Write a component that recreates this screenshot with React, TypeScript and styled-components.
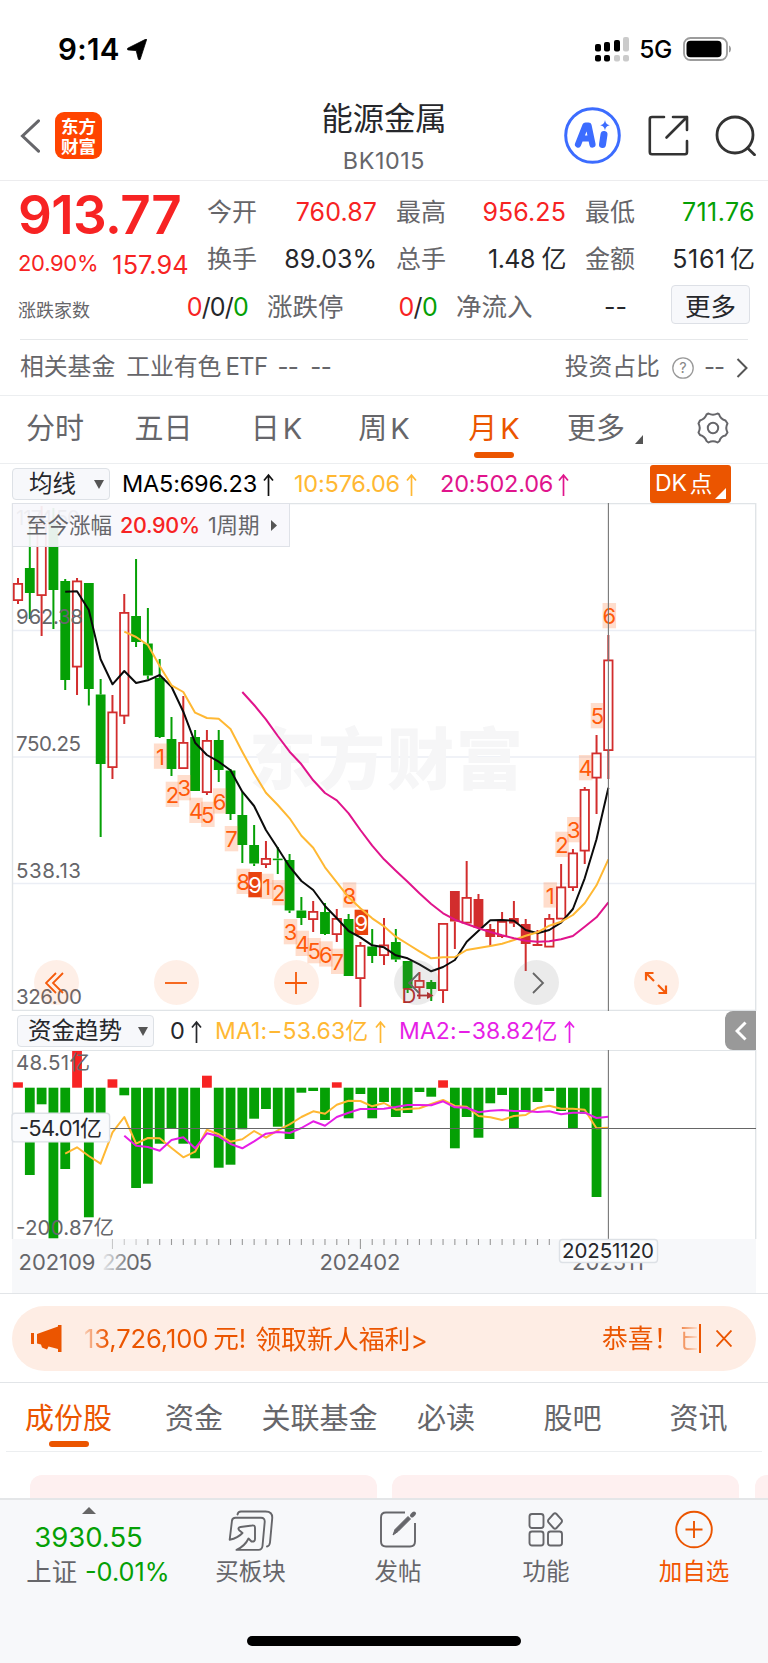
import React from 'react';
import styled, { createGlobalStyle } from 'styled-components';

const RED = '#f72323';
const GREEN = '#05a005';
const ORANGE = '#eb5500';
const GRAY = '#66666a';
const INK = '#26272b';
const YELLOW = '#ffb833';
const PINK = '#e0148c';
const MAGENTA = '#e61ee6';
const LINE = '#e6e8ea';

const Global = createGlobalStyle`
  * { box-sizing: border-box; }
  body {
    margin: 0;
    background: #fff;
    font-family: Inter, "Noto Sans CJK SC", sans-serif;
    color: ${INK};
  }
`;

const Page = styled.div`
  width: 768px;
  height: 1663px;
  overflow: hidden;
  display: flex;
  flex-direction: column;
  background: #fff;
`;

const Label = styled.span<{ $size?: number; $color?: string; $ls?: number; $weight?: number }>`
  font-size: ${(p) => p.$size ?? 25}px;
  color: ${(p) => p.$color ?? GRAY};
  letter-spacing: ${(p) => p.$ls ?? 0}px;
  font-weight: ${(p) => p.$weight ?? 400};
  line-height: 1.2;
  white-space: nowrap;
`;

/* ---------- status bar ---------- */
const StatusBar = styled.div`
  height: 96px;
  flex: none;
  display: flex;
  align-items: center;
  padding: 2px 36px 0 58px;
  svg { flex: none; }
`;
const Spacer = styled.div`flex: 1;`;
const Clock = styled(Label)`
  width: 69px;
  margin-top: 1px;
`;

/* ---------- header ---------- */
const Header = styled.header`
  height: 85px;
  flex: none;
  display: grid;
  grid-template-columns: 1fr auto 1fr;
  border-bottom: 1.5px solid #ececee;
`;
const HeaderLeft = styled.div`
  display: flex;
  align-items: center;
  gap: 15px;
  padding: 0 0 5px 20px;
`;
const HeaderRight = styled(HeaderLeft)`
  justify-content: flex-end;
  gap: 26.5px;
  padding: 0 12px 5px 0;
`;
const Logo = styled.div`
  width: 47px;
  height: 47px;
  border-radius: 9px;
  background: #ff4400;
  color: #fff;
  font: 700 17.5px/20px "Noto Sans CJK SC", sans-serif;
  display: flex;
  align-items: center;
  justify-content: center;
  text-align: center;
`;
const TitleBlock = styled.div`
  display: flex;
  flex-direction: column;
  align-items: center;
  padding-top: 5px;
`;

/* ---------- quote ---------- */
const Quote = styled.section`
  height: 158px;
  flex: none;
  display: grid;
  grid-template-columns: 189px 1fr;
  grid-template-rows: 103px 1fr;
  padding: 0 14px 0 18px;
`;
const PriceBlock = styled.div`
  display: flex;
  flex-direction: column;
  padding-top: 3px;
`;
const ChangeRow = styled.div`
  display: flex;
  align-items: center;
  gap: 14px;
  height: 30px;
  margin-top: 1px;
`;
const StatGrid = styled.div`
  display: grid;
  grid-template-columns: repeat(3, 170px);
  column-gap: 19px;
  grid-auto-rows: 47px;
  padding-top: 7px;
`;
const Stat = styled.div`
  display: flex;
  align-items: center;
  justify-content: space-between;
`;
const BreadthRow = styled.div`
  grid-column: 1 / 3;
  display: flex;
  align-items: center;
  padding-bottom: 9px;
`;
const Cell = styled.div<{ $w: number; $end?: boolean }>`
  width: ${(p) => p.$w}px;
  flex: none;
  display: flex;
  align-items: center;
  justify-content: ${(p) => (p.$end ? 'flex-end' : 'flex-start')};
`;
const MoreButton = styled.button`
  width: 79px;
  height: 39px;
  margin: 0 0 5px;
  padding: 0;
  border: 1.5px solid #dde0e6;
  border-radius: 4px;
  background: #f7f8fb;
  font: 400 25.5px/30px "Noto Sans CJK SC", sans-serif;
  color: ${INK};
`;

const FundRow = styled.div`
  height: 56px;
  flex: none;
  margin: 0 20px;
  border-top: 1.5px solid ${LINE};
  display: flex;
  align-items: center;
`;

/* ---------- tabs ---------- */
const Tabs = styled.nav<{ $h: number; $inset?: number }>`
  height: ${(p) => p.$h}px;
  flex: none;
  display: flex;
  margin: 0 ${(p) => p.$inset ?? 0}px;
  border-bottom: 1.5px solid #eceef0;
`;
const TopTabs = styled(Tabs)`
  border-top: 1.5px solid #eceef0;
`;
const Tab = styled.div<{ $w: number; $active?: boolean; $low?: boolean }>`
  width: ${(p) => p.$w}px;
  flex: none;
  display: flex;
  flex-direction: column;
  align-items: center;
  padding-top: ${(p) => (p.$low ? 18 : 15)}px;
  font-size: 29px;
  line-height: 36px;
  word-spacing: -5px;
  white-space: nowrap;
  color: ${(p) => (p.$active ? ORANGE : GRAY)};
  &::after {
    content: '';
    display: ${(p) => (p.$active ? 'block' : 'none')};
    width: 40px;
    height: 6px;
    margin-top: ${(p) => (p.$low ? 4 : 5)}px;
    border-radius: 3px;
    background: ${ORANGE};
  }
`;
const MoreTab = styled(Tab)`
  flex-direction: row;
  align-items: flex-start;
  justify-content: center;
  gap: 10px;
  svg { margin-top: 24px; }
`;

/* ---------- indicator rows ---------- */
const IndicatorRow = styled.div<{ $h: number; $pl: number }>`
  height: ${(p) => p.$h}px;
  flex: none;
  display: flex;
  align-items: center;
  padding-left: ${(p) => p.$pl}px;
`;
const SelectBox = styled.div<{ $w: number }>`
  width: ${(p) => p.$w}px;
  height: 32px;
  flex: none;
  display: flex;
  align-items: center;
  justify-content: space-between;
  margin-top: 1px;
  padding: 0 5px 0 ${(p) => (p.$w > 110 ? 10 : 16)}px;
  border: 1.5px solid #dde1e6;
  border-radius: 4px;
  background: #f7f8fb;
`;
const Reading = styled.div<{ $w: number }>`
  width: ${(p) => p.$w}px;
  flex: none;
  display: flex;
  align-items: center;
  justify-content: space-between;
  padding-top: 2px;
`;
const DKButton = styled.div`
  width: 81px;
  height: 38px;
  margin-left: 81px;
  border-radius: 3px;
  background: ${ORANGE};
  display: flex;
  align-items: center;
  padding-left: 5px;
  gap: 3px;
`;
const Corner = styled.svg`
  margin-top: 19px;
`;

/* ---------- charts ---------- */
const ChartFrame = styled.div<{ $h: number }>`
  height: ${(p) => p.$h}px;
  flex: none;
  position: relative;
  svg { display: block; }
`;
const RangeTip = styled.div`
  position: absolute;
  left: 12px;
  top: 0;
  width: 278px;
  height: 44px;
  display: flex;
  align-items: center;
  padding: 1px 0 0 13px;
  gap: 8px;
  border: 1.5px solid #dfe2e8;
  background: rgba(248, 248, 252, 0.93);
`;
const SideHandle = styled.div`
  width: 31px;
  height: 39px;
  margin-left: 150px;
  border-radius: 8px 0 0 8px;
  background: #999;
  display: flex;
  align-items: center;
  justify-content: center;
`;
const RoundButtons = styled.div`
  position: absolute;
  left: 33.5px;
  bottom: 6px;
  display: flex;
  gap: 75px;
`;
const RoundButton = styled.div<{ $neutral?: boolean }>`
  width: 45px;
  height: 45px;
  border-radius: 50%;
  background: ${(p) => (p.$neutral ? 'rgba(120,120,120,.15)' : 'rgba(250,110,40,.11)')};
  display: flex;
  align-items: center;
  justify-content: center;
`;

/* ---------- banner ---------- */
const BannerWrap = styled.div`
  height: 90px;
  flex: none;
  border-top: 1.5px solid #e2e5e8;
  border-bottom: 1.5px solid #e2e5e8;
  padding: 12px 12px 0;
`;
const Banner = styled.div`
  height: 65px;
  border-radius: 33px;
  background: #feede4;
  display: flex;
  align-items: center;
  padding-left: 19px;
`;
const Marquee = styled.div`
  flex: none;
  width: 613px;
  margin-left: 21px;
  padding-top: 2px;
  display: flex;
  overflow: hidden;
  mask-image: linear-gradient(90deg, rgba(0,0,0,.2) 0, #000 24px, #000 588px, rgba(0,0,0,.1) 613px);
`;
const Bar = styled.div`
  width: 1.5px;
  height: 29px;
  background: ${ORANGE};
`;

const Cards = styled.div`
  height: 46px;
  flex: none;
  padding: 23px 0 0 29.5px;
  display: flex;
  gap: 15.5px;
`;
const Card = styled.div`
  width: 347px;
  flex: none;
  border-radius: 12px 12px 0 0;
  background: #fef0f0;
`;

/* ---------- bottom bar ---------- */
const BottomBar = styled.footer`
  height: 165px;
  flex: none;
  border-top: 2.5px solid #e4e6e8;
  background: #f7f8fa;
  display: flex;
  flex-direction: column;
  justify-content: space-between;
  align-items: center;
  padding-bottom: 17px;
`;
const BarItems = styled.div`
  width: 768px;
  display: flex;
`;
const IndexBox = styled.div`
  width: 177px;
  display: flex;
  flex-direction: column;
  align-items: center;
  padding-top: 7px;
`;
const IndexLine = styled.div`
  display: flex;
  align-items: center;
  gap: 8px;
  margin: 3px 0 0 19px;
`;
const BarItem = styled.div<{ $w: number }>`
  width: ${(p) => p.$w}px;
  flex: none;
  display: flex;
  flex-direction: column;
  align-items: center;
  padding-top: 9px;
  gap: 6px;
`;
const HomeIndicator = styled.div`
  width: 274px;
  height: 10px;
  border-radius: 5px;
  background: #000;
`;

/* ---------- data, in chart pixels: [kind, high, bodyTop, bodyBottom, low] ---------- */
type Candle = ['u' | 'd' | 's', number, number, number, number];
const candles: Candle[] = [
  ['u', 578, 583.5, 600.5, 604], ['d', 520, 568, 593, 619], ['u', 506, 524, 595.5, 636], ['d', 508, 524, 590, 629],
  ['d', 579, 581, 680, 690], ['u', 578, 581, 667, 695], ['d', 583, 583, 689, 705.5], ['d', 679, 694.5, 764, 837],
  ['u', 695, 712, 767.5, 779], ['u', 594, 612.5, 716, 724], ['d', 559, 616, 642, 647], ['d', 608, 643.5, 675.5, 679],
  ['d', 659, 678, 737, 738], ['d', 717, 739, 769, 776], ['u', 696, 742.5, 768.5, 769], ['d', 730, 737, 791, 791],
  ['u', 730, 740.5, 792.5, 795], ['d', 730, 740, 770, 782], ['d', 769, 770.5, 814, 820], ['d', 792, 815, 845, 863],
  ['d', 825, 845, 863.5, 866], ['u', 841, 858.5, 864.5, 868], ['d', 847, 858.6, 860.2, 874], ['d', 854, 860, 910.5, 913],
  ['d', 897, 910.5, 918, 925], ['u', 901, 911.5, 919.5, 932], ['d', 903, 912, 934, 935], ['u', 909, 918.5, 934.5, 942],
  ['d', 914, 919, 976, 976], ['u', 942, 945.5, 978.5, 1007], ['d', 929, 946.5, 956, 963], ['u', 918, 945, 955.5, 965],
  ['d', 929, 942, 959.5, 962], ['d', 961, 961, 988.5, 993], ['u', 972, 980.5, 987.5, 999], ['d', 980, 982, 989, 1001],
  ['u', 923, 923.5, 990.5, 1003], ['s', 891, 891, 921.5, 949], ['u', 861, 897.5, 923, 923], ['s', 894, 899, 928, 928],
  ['s', 924, 929, 937, 946], ['u', 912, 921.5, 936.5, 938], ['s', 901, 918, 923.5, 927], ['s', 919, 924, 944, 971],
  ['s', 930, 944, 946, 946], ['u', 914, 918.5, 947, 947], ['u', 864, 887, 919, 919], ['u', 849, 853, 887.5, 891],
  ['u', 787, 789.5, 851, 864], ['u', 735, 753, 778, 814], ['u', 635, 660, 750.5, 779],
];
const ma5 = [591.7, 591.3, 610, 659.3, 684.3, 671, 683, 680.3, 675, 686.7, 711.7, 742.7, 755, 761.7, 770.3, 791.7, 806, 830, 848.3, 866.7, 881, 890, 906, 918.3, 931, 937.3, 945.3, 947.3, 955.3, 958.3, 964.3, 971.3, 967, 960, 941.7, 930.7, 920.3, 920, 920.7, 930, 933.3, 930, 922.7, 909, 878.3, 839.3, 787.7];
const ma10 = [631.7, 637, 645, 666, 685.3, 692, 712.7, 718, 718.7, 729, 751.7, 773.3, 792.7, 805, 818.3, 835.7, 847.7, 867.3, 882.3, 897.3, 908.3, 918.3, 926.3, 936.7, 944, 951.3, 958.3, 957.3, 957, 950, 948, 946, 943.7, 940, 935.7, 932.3, 925.7, 921.7, 915, 903.3, 885.3, 859.3];
const ma20 = [692, 705, 719.3, 736, 751.7, 764.3, 780.3, 793, 800.3, 813.3, 830, 845.7, 859.3, 870.7, 881.7, 893.3, 904, 913.3, 919.7, 924, 928.3, 932, 935.3, 938.3, 940.7, 941.7, 941.3, 939.3, 936, 926.7, 917.3, 902.3];
const counts: [number, string, number][] = [
  [12, '1', 743.5], [13, '2', 781.7], [14, '3', 775], [15, '4', 797.7], [16, '5', 801.7], [17, '6', 788.3], [18, '7', 826],
  [19, '8', 868.7], [20, '9', 872], [21, '1', 873.7], [22, '2', 880], [23, '3', 919], [24, '4', 930.7], [25, '5', 938],
  [26, '6', 941.3], [27, '7', 948.7], [28, '8', 882.3], [29, '9', 909.7], [45, '1', 882.3], [46, '2', 831.7], [47, '3', 817],
  [48, '4', 755], [49, '5', 703], [50, '6', 603],
];
const flows = [1082.3, 1175, 1104.3, 1238.3, 1169, 1051, 1217.3, 1125, 1079.3, 1095.3, 1188, 1183.7, 1143.7, 1128, 1143.7, 1158.3, 1075.7, 1167.7, 1164.7, 1129.3, 1118.7, 1109, 1126.7, 1139, 1092.7, 1091, 1120, 1082.3, 1118.3, 1094, 1118.3, 1102, 1117, 1113, 1092, 1096.7, 1080.3, 1148.3, 1117, 1137.7, 1103.3, 1095, 1128.7, 1111.7, 1102, 1091, 1111, 1129, 1113.7, 1197];
const flow5 = [1153.7, 1147.3, 1156, 1163.7, 1132.3, 1117, 1143.7, 1138, 1138.3, 1148, 1157.3, 1151.7, 1129.7, 1134.3, 1141.7, 1139.3, 1131, 1137.7, 1130.3, 1124.3, 1117, 1111.3, 1113.7, 1104.7, 1100.7, 1101, 1106.3, 1103, 1109.7, 1109, 1108.3, 1104, 1100, 1106, 1106.7, 1116, 1117.3, 1120, 1116, 1115, 1108, 1105.7, 1108.7, 1108.7, 1109.7, 1128.3, 1127.7];
const flow10 = [1135.7, 1145.7, 1147, 1150.7, 1140, 1137.3, 1148.3, 1133.3, 1136.3, 1144, 1148.3, 1141.3, 1133.7, 1132, 1133, 1128, 1121.3, 1125.7, 1117, 1112.7, 1109, 1109, 1108.7, 1107, 1105, 1105, 1105.3, 1101.3, 1107.3, 1107.7, 1112.3, 1110.7, 1110, 1111, 1111, 1112, 1111.3, 1114.3, 1112.7, 1112.7, 1118, 1116.7];

const px = (i: number) => 18 + 11.807 * i;
const path = (ys: number[], start: number) => ys.map((y, k) => `${px(start + k).toFixed(1)},${y}`).join(' ');

const AxisText = styled.text<{ $large?: boolean; $ink?: boolean }>`
  font: 400 ${(p) => (p.$large ? 22 : 20.5)}px Inter, "Noto Sans CJK SC", sans-serif;
  fill: ${(p) => (p.$ink ? INK : GRAY)};
`;
const CountText = styled.text`
  font: 400 22px Inter, sans-serif;
  text-anchor: middle;
`;
const Watermark = styled.text`
  font: 900 67px "Noto Sans CJK SC", sans-serif;
  fill: #f6f6f7;
`;

const Up = ({ color }: { color: string }) => (
  <svg width="11" height="24" viewBox="0 0 11 24" fill="none" stroke={color} strokeWidth="1.7">
    <path d="M5.5 23V2M1 7.5L5.5 2L10 7.5" />
  </svg>
);
const Down = () => (
  <svg width="10" height="9" viewBox="0 0 10 9"><path d="M0 0H10L5 9Z" fill="#555" /></svg>
);

const PriceChart = () => (
  <svg width="768" height="508" viewBox="0 503 768 508">
    <g stroke="#ebeef5" strokeWidth="1.4">
      <path d="M12 630.5H756M12 757H756M12 883.5H756" />
      <path d="M12.5 503.6H755.7V1010.4H12.5Z" fill="none" stroke="#e0e4e7" />
    </g>
    <Watermark x="249" y="783.5" textLength="274">东方财富</Watermark>
    {candles.map(([k, hi, top, bot, lo], i) => {
      const x = px(i);
      const color = k === 'd' ? GREEN : '#d22d2d';
      return (
        <g key={i} stroke={color} strokeWidth="2">
          <path d={`M${x} ${hi}V${top}M${x} ${bot}V${lo}`} />
          {k === 'u'
            ? <rect x={x - 4.2} y={top + 0.4} width="8.4" height={Math.max(bot - top - 0.8, 1)} fill="none" strokeWidth="1.8" />
            : <rect x={x - 4.9} y={top} width="9.8" height={bot - top} fill={color} stroke="none" />}
        </g>
      );
    })}
    {counts.map(([i, n, y]) => (
      <g key={i}>
        <rect x={px(i) - 5.8} y={y} width="13.5" height="25.3" fill={n === '9' ? '#e8430f' : 'rgba(255,120,50,.25)'} />
        <CountText x={px(i) + 0.9} y={y + 21.3} fill={n === '9' ? '#fff' : '#ff5a0a'}>{n}</CountText>
      </g>
    ))}
    <g fill="none" strokeWidth="2" strokeLinejoin="round">
      <polyline points={path(ma5, 4)} stroke="#0b0b0b" />
      <polyline points={path(ma10, 9)} stroke={YELLOW} />
      <polyline points={path(ma20, 19)} stroke={PINK} />
    </g>
    <AxisText x="16" y="525" textLength="64">1174.50</AxisText>
    <AxisText x="16" y="624.3" textLength="67">962.38</AxisText>
    <AxisText x="16" y="750.5" textLength="65">750.25</AxisText>
    <AxisText x="16" y="877.5" textLength="65">538.13</AxisText>
    <AxisText x="16" y="1004" textLength="66">326.00</AxisText>
    <text x="401.5" y="1003" fontSize="20.5" fill="#b62828">D</text>
    <path d="M417 995.5H430" stroke="#b62828" strokeWidth="1.8" />
    <path d="M427 992L433.5 995.5L427 999Z" fill="#b62828" />
    <path d="M608.4 503V1011" stroke="#777" strokeWidth="1.1" />
  </svg>
);

const FlowChart = () => (
  <svg width="768" height="243" viewBox="0 1050 768 243">
    <path d="M12.5 1239V1050.2M12 1050.2H756M755.7 1050V1239" fill="none" stroke="#e0e4e7" strokeWidth="1.4" />
    <rect x="12" y="1239" width="744" height="54" fill="#f7f8fa" />
    {flows.map((y, i) => (
      <rect key={i} x={px(i) - 4.9} width="9.8" y={Math.min(y, 1087.7)} height={Math.abs(y - 1087.7)} fill={y < 1087.7 ? RED : GREEN} />
    ))}
    <AxisText x="16" y="1070" textLength="74">48.51亿</AxisText>
    <AxisText x="16" y="1235" textLength="98">-200.87亿</AxisText>
    <g fill="none" strokeWidth="2" strokeLinejoin="round">
      <polyline points={path(flow5, 4)} stroke={YELLOW} />
      <polyline points={path(flow10, 9)} stroke={MAGENTA} />
    </g>
    <g stroke="#999" strokeWidth="1.1">
      {Array.from({ length: 38 }, (_, k) => k + 8).map((i) => (
        <path key={i} d={`M${px(i)} 1239V${i === 8 || i === 29 ? 1249 : 1245}`} opacity={i < 11 ? 0.5 : 1} />
      ))}
      <path d="M12 1128.5H756" stroke="#666" />
      <path d="M608.4 1050V1239" stroke="#777" />
    </g>
    <rect x="12" y="1113.3" width="97.6" height="28.6" rx="3" fill="#fafbfd" stroke="#dde1e6" strokeWidth="1.4" />
    <AxisText x="19" y="1136" textLength="83" $large $ink>-54.01亿</AxisText>
    <defs>
      <linearGradient id="fade" gradientUnits="userSpaceOnUse" x1="103" x2="132" y1="0" y2="0">
        <stop offset="0" stopColor={GRAY} stopOpacity="0.1" />
        <stop offset="1" stopColor={GRAY} />
      </linearGradient>
    </defs>
    <AxisText x="18.5" y="1270.3" textLength="77" $large>202109</AxisText>
    <text x="102" y="1270.3" textLength="50" fontSize="22" fill="url(#fade)">2205</text>
    <AxisText x="319.5" y="1270.3" textLength="81" $large>202402</AxisText>
    <AxisText x="572" y="1270.3" textLength="72" $large>202511</AxisText>
    <rect x="559.5" y="1239.5" width="98" height="23" rx="3" fill="#fafbfd" stroke="#dde1e6" strokeWidth="1.4" />
    <AxisText x="562" y="1258.2" textLength="92" $ink>20251120</AxisText>
  </svg>
);

export default function App() {
  return (
    <Page>
      <Global />
      <StatusBar>
        <Clock $size={29.5} $weight={600} $color="#000" $ls={0.3}>9:14</Clock>
        <svg width="20" height="21" viewBox="0 0 20 21"><path d="M19.6 .6C20 .2 19.5-.1 19 .1L.8 9.2C0 9.8.1 10.7 1 10.9L9.2 11.6 11.4 20.2C11.9 21.2 12.9 21 13.2 20.3Z" stroke="#000" strokeWidth=".8" /></svg>
        <Spacer />
        <svg width="34" height="25" viewBox="0 0 34 25">
          <g fill="#000">
            <rect x="0" y="7" width="6" height="7.5" rx="2" /><rect x="9" y="5" width="6" height="9.5" rx="2" /><rect x="19" y="3" width="6" height="11.5" rx="2" />
            <rect x="0" y="18" width="6" height="6.5" rx="2" /><rect x="9" y="18" width="6" height="6.5" rx="2" />
          </g>
          <g fill="#cbcbcb"><rect x="28" y="0" width="6" height="14.5" rx="2" /><rect x="19" y="18" width="6" height="6.5" rx="2" /><rect x="28" y="18" width="6" height="6.5" rx="2" /></g>
        </svg>
        <Cell $w={54} $end style={{ paddingRight: 11 }}><Label $size={24.5} $color="#000" $weight={500} $ls={-0.4} style={{ marginTop: 2 }}>5G</Label></Cell>
        <svg width="49" height="24" viewBox="0 0 49 24">
          <rect x="1" y="1" width="43" height="22" rx="6.5" fill="none" stroke="#9c9c9c" strokeWidth="1.8" />
          <rect x="3.5" y="3.8" width="35" height="16.4" rx="4" /><path d="M46 8.5C48.7 9.5 48.7 14.5 46 15.5Z" fill="#9c9c9c" />
        </svg>
      </StatusBar>

      <Header>
        <HeaderLeft>
          <svg width="20" height="34" viewBox="0 0 20 34" fill="none" stroke="#66666a" strokeWidth="3" strokeLinecap="round"><path d="M18.5 1.8L2.5 17L18.5 32.2" /></svg>
          <Logo>东方<br />财富</Logo>
        </HeaderLeft>
        <TitleBlock>
          <Label $size={31.3} $color={INK}>能源金属</Label>
          <Label $size={23.3} $ls={0.6} style={{ marginTop: 8 }}>BK1015</Label>
        </TitleBlock>
        <HeaderRight>
          <svg width="57" height="57" viewBox="0 0 57 57">
            <circle cx="28.5" cy="28.5" r="26.8" fill="none" stroke="#3c6cff" strokeWidth="3" />
            <g fill="none" stroke="#3c6cff" strokeLinecap="round" strokeLinejoin="round">
              <path d="M14 37.5L21.5 18.5H24.5L28.5 37.5M18.5 31.5H26" strokeWidth="6.2" />
              <path d="M40 27.5L38.5 37.5" strokeWidth="7" />
            </g>
            <path d="M41 13C41.8 16.5 42.6 17.4 46 18.2C42.6 19 41.8 20 41 23.5C40.2 20 39.4 19 36 18.2C39.4 17.4 40.2 16.5 41 13Z" fill="#3c6cff" />
          </svg>
          <svg width="41" height="41" viewBox="0 0 41 41" fill="none" stroke="#333" strokeWidth="2.6" strokeLinecap="round" strokeLinejoin="round">
            <path d="M16 2H4Q1.8 2 1.8 4V37Q1.8 39.2 4 39.2H37Q39 39.2 39 37V26M39 15V2H25M39 2L18.5 22.5" />
          </svg>
          <svg width="41" height="41" viewBox="0 0 41 41" fill="none" stroke="#333" strokeWidth="2.8" strokeLinecap="round">
            <circle cx="20" cy="20" r="18" /><path d="M32.5 33L39.5 39.8" />
          </svg>
        </HeaderRight>
      </Header>

      <Quote>
        <PriceBlock>
          <Label $size={53} $weight={600} $color={RED} $ls={-0.6}>913.77</Label>
          <ChangeRow>
            <Label $size={22} $color={RED} $ls={-0.3}>20.90%</Label>
            <Label $size={25.3} $color={RED} $ls={0.1} style={{ marginTop: 3 }}>157.94</Label>
          </ChangeRow>
        </PriceBlock>
        <StatGrid>
          <Stat><Label>今开</Label><Label $color={RED} $ls={0.1}>760.87</Label></Stat>
          <Stat><Label>最高</Label><Label $color={RED} $ls={0.1}>956.25</Label></Stat>
          <Stat><Label>最低</Label><Label $color={GREEN} $ls={0.4}>711.76</Label></Stat>
          <Stat><Label>换手</Label><Label $color={INK}>89.03%</Label></Stat>
          <Stat><Label>总手</Label><Label $color={INK} $ls={-0.5}>1.48 亿</Label></Stat>
          <Stat><Label>金额</Label><span><Label $color={INK} $ls={0.7}>5161</Label><Label $color={INK} style={{ marginLeft: 4 }}>亿</Label></span></Stat>
        </StatGrid>
        <BreadthRow>
          <Cell $w={100}><Label $size={18} style={{ marginTop: 7 }}>涨跌家数</Label></Cell>
          <Cell $w={130} $end><Label $color={RED} $ls={-0.8}>0</Label><Label $color={INK} $ls={-0.8}>/0/</Label><Label $color={GREEN} $ls={-0.8}>0</Label></Cell>
          <Cell $w={95} style={{ paddingLeft: 19 }}><Label $size={25.5}>涨跌停</Label></Cell>
          <Cell $w={94} $end><Label $color={RED} $ls={-0.7}>0</Label><Label $color={INK} $ls={-0.7}>/</Label><Label $color={GREEN} $ls={-0.7}>0</Label></Cell>
          <Cell $w={95} style={{ paddingLeft: 19 }}><Label $size={25.5}>净流入</Label></Cell>
          <Cell $w={95} $end><Label $color={INK}>--</Label></Cell>
          <Cell $w={123} $end><MoreButton>更多</MoreButton></Cell>
        </BreadthRow>
      </Quote>

      <FundRow>
        <Label $size={23.8}>相关基金</Label>
        <Label $size={23.8} style={{ marginLeft: 11 }}>工业有色</Label>
        <Label $size={24} $ls={-0.7} style={{ marginLeft: 4 }}>ETF</Label>
        <Label $size={24} $ls={-0.6} style={{ marginLeft: 10 }}>--</Label>
        <Label $size={24} $ls={-0.6} style={{ marginLeft: 12 }}>--</Label>
        <Spacer />
        <Label $size={23.8}>投资占比</Label>
        <svg width="22" height="22" viewBox="0 0 22 22" style={{ marginLeft: 12 }}>
          <circle cx="11" cy="11" r="10.2" fill="none" stroke="#999" strokeWidth="1.3" />
          <text x="11" y="16.2" fontSize="14.5" textAnchor="middle" fill="#888">?</text>
        </svg>
        <Label $size={24} $ls={-1} style={{ marginLeft: 10 }}>--</Label>
        <svg width="12" height="20" viewBox="0 0 12 20" fill="none" stroke="#555" strokeWidth="2" style={{ marginLeft: 12 }}><path d="M1.5 1L10.5 10L1.5 19" /></svg>
      </FundRow>

      <TopTabs $h={69}>
        <Tab $w={110}>分时</Tab>
        <Tab $w={107}>五日</Tab>
        <Tab $w={119}>日 K</Tab>
        <Tab $w={96}>周 K</Tab>
        <Tab $w={124} $active>月 K</Tab>
        <MoreTab $w={98}>更多<svg width="8" height="9" viewBox="0 0 8 9"><path d="M8 0V9H0Z" fill="#555" /></svg></MoreTab>
        <Tab $w={118}>
          <svg width="32" height="32" viewBox="0 0 32 32" fill="none" stroke="#66666a" strokeWidth="2" strokeLinejoin="round" style={{ marginTop: 1 }}>
            <path d="M11.5 1.5Q16 4 20.5 1.5L22 2.2Q23.500 7 28.5 8.5L30.5 11.5Q28 16 30.5 20.5L28.5 23.5Q23.5 24.5 22.5 29L20.5 30.5Q16 28 11.5 30.5L9.5 29Q8 24.5 3 23L1.5 20.5Q4 16 1.5 11.5L3 8.5Q8 7 9.5 2.5Z" />
            <circle cx="16" cy="16" r="5.2" />
          </svg>
        </Tab>
      </TopTabs>

      <IndicatorRow $h={39} $pl={12}>
        <SelectBox $w={98}><Label $size={23.5} $color={INK}>均线</Label><Down /></SelectBox>
        <Reading $w={152} style={{ marginLeft: 12 }}><Label $size={23.5} $color="#000" $ls={-0.2}>MA5:696.23</Label><Up color="#111" /></Reading>
        <Reading $w={123} style={{ marginLeft: 20 }}><Label $size={23.5} $color={YELLOW} $ls={-0.2}>10:576.06</Label><Up color={YELLOW} /></Reading>
        <Reading $w={129} style={{ marginLeft: 23 }}><Label $size={23.5} $color={PINK} $ls={-0.2}>20:502.06</Label><Up color={PINK} /></Reading>
        <DKButton>
          <Label $size={23} $color="#fff" $ls={-0.2}>DK</Label><Label $size={22.5} $color="#fff">点</Label>
          <Corner width="11" height="11" viewBox="0 0 11 11"><path d="M11 0V11H0Z" fill="#fff" /></Corner>
        </DKButton>
      </IndicatorRow>

      <ChartFrame $h={508}>
        <PriceChart />
        <RangeTip>
          <Label $size={21.5}>至今涨幅</Label>
          <Label $size={21.5} $color={RED} $weight={500} $ls={-0.3}>20.90%</Label>
          <Label $size={21.5} $ls={-0.1}>1周期</Label>
          <svg width="6" height="11" viewBox="0 0 6 11" style={{ marginLeft: 4 }}><path d="M0 0L6 5.5L0 11Z" fill="#555" /></svg>
        </RangeTip>
        <RoundButtons>
          <RoundButton><svg width="22" height="22" viewBox="0 0 22 22" fill="none" stroke="#f55a0a" strokeWidth="1.8"><path d="M11 1L1 11L11 21M18 1L8 11L18 21" /></svg></RoundButton>
          <RoundButton><svg width="22" height="22" viewBox="0 0 22 22" stroke="#f55a0a" strokeWidth="1.8"><path d="M0 11H22" /></svg></RoundButton>
          <RoundButton><svg width="22" height="22" viewBox="0 0 22 22" stroke="#f55a0a" strokeWidth="1.8"><path d="M0 11H22M11 0V22" /></svg></RoundButton>
          <RoundButton $neutral><svg width="22" height="22" viewBox="0 0 22 22" fill="none" stroke="#666" strokeWidth="1.8"><path d="M14 1L4 11L14 21" /></svg></RoundButton>
          <RoundButton $neutral><svg width="22" height="22" viewBox="0 0 22 22" fill="none" stroke="#666" strokeWidth="1.8"><path d="M8 1L18 11L8 21" /></svg></RoundButton>
          <RoundButton><svg width="24" height="24" viewBox="0 0 24 24" fill="none" stroke="#f55a0a" strokeWidth="2.2"><path d="M2 9.5V2H9.5M2 2L10 10M22 14.5V22H14.5M22 22L14 14" /></svg></RoundButton>
        </RoundButtons>
      </ChartFrame>

      <IndicatorRow $h={39} $pl={17}>
        <SelectBox $w={137}><Label $size={23.5} $color={INK}>资金趋势</Label><Down /></SelectBox>
        <Reading $w={32} style={{ marginLeft: 16 }}><Label $size={23.5} $color={INK}>0</Label><Up color={INK} /></Reading>
        <Reading $w={171} style={{ marginLeft: 13 }}><Label $size={23} $color={YELLOW} $ls={0.1}>MA1:−53.63亿</Label><Up color={YELLOW} /></Reading>
        <Reading $w={176} style={{ marginLeft: 13 }}><Label $size={23} $color={MAGENTA} $ls={0.1}>MA2:−38.82亿</Label><Up color={MAGENTA} /></Reading>
        <SideHandle><svg width="12" height="20" viewBox="0 0 12 20" fill="none" stroke="#fff" strokeWidth="3"><path d="M10.5 1.5L2 10L10.5 18.5" /></svg></SideHandle>
      </IndicatorRow>

      <ChartFrame $h={243}><FlowChart /></ChartFrame>

      <BannerWrap>
        <Banner>
          <svg width="32" height="27" viewBox="0 0 32 27" fill={ORANGE}><path d="M0 8H3V19H0ZM6 9L27 1.5V0H30.5V27H27V24L17.5 21.5L16 24.5L11 22.5L10 19.5L6 18.5Z" /></svg>
          <Marquee>
            <Label $size={25.5} $color={ORANGE} $ls={-0.1}>13,726,100</Label>
            <Label $size={25.6} $color={ORANGE} style={{ marginLeft: 5 }}>元!</Label>
            <Label $size={25.9} $color={ORANGE} style={{ marginLeft: 9 }}>领取新人福利&gt;</Label>
            <Spacer />
            <Label $size={25.8} $color={ORANGE} style={{ width: 95 }}>恭喜！已</Label>
          </Marquee>
          <Bar style={{ marginLeft: 2 }} />
          <svg width="16" height="17" viewBox="0 0 16 17" fill="none" stroke={ORANGE} strokeWidth="1.9" style={{ marginLeft: 15 }}><path d="M.5 .5L15.5 16.5M15.5 .5L.5 16.5" /></svg>
        </Banner>
      </BannerWrap>

      <Tabs $h={69} $inset={6}>
        <Tab $low $w={125} $active>成份股</Tab>
        <Tab $low $w={126}>资金</Tab>
        <Tab $low $w={125}>关联基金</Tab>
        <Tab $low $w={128}>必读</Tab>
        <Tab $low $w={125}>股吧</Tab>
        <Tab $low $w={127}>资讯</Tab>
      </Tabs>
      <Cards><Card /><Card /><Card /></Cards>

      <BottomBar>
        <BarItems>
          <IndexBox>
            <svg width="14" height="7" viewBox="0 0 14 7"><path d="M7 0L14 7H0Z" fill="#666" /></svg>
            <Label $size={27.5} $color={GREEN} style={{ marginTop: 7 }}>3930.55</Label>
            <IndexLine><Label $size={25.3}>上证</Label><Label $size={25.3} $color={GREEN}>-0.01%</Label></IndexLine>
          </IndexBox>
          <BarItem $w={147}>
            <svg width="46" height="43" viewBox="0 0 46 43" fill="none" stroke="#66666a" strokeWidth="1.9" strokeLinejoin="round" strokeLinecap="round">
              <path d="M9.500 5.500Q10 2.500 13 2.500H37.500Q44.800 2.500 44.200 9.500L42 33.500Q41.600 37 39 37.500" />
              <path d="M1.700 30.700L4 11.500Q4.400 8.700 7.500 8.700H33Q37 8.700 36.700 13L34.500 37Q34 40.800 30.500 40.900H8.500Q17 37 20.500 29.500L23.500 32.500Q27 33 27 30V19Q27 15.800 24 16.500L12.500 18Q9 19 11.500 21.500L14.500 24Q10 29 1.700 30.700Z" />
            </svg>
            <Label $size={23.5}>买板块</Label>
          </BarItem>
          <BarItem $w={148}>
            <svg width="38" height="43" viewBox="0 0 38 43" fill="none" stroke="#66666a" strokeWidth="1.9">
              <path d="M26 3.500H7Q2 3.500 2 8.500V32.500Q2 37.500 7 37.500H31Q36 37.500 36 32.500V14" /><path d="M14 26L16 20.5L29 7.5L31.5 10L19 22.5Z" fill="#66666a" strokeWidth="1" /><path d="M33 6.500L35 4.500" strokeWidth="4" strokeLinecap="round" />
            </svg>
            <Label $size={23.5}>发帖</Label>
          </BarItem>
          <BarItem $w={148}>
            <svg width="36" height="43" viewBox="0 0 36 43" fill="none" stroke="#66666a" strokeWidth="1.9">
              <rect x="1.5" y="5" width="14" height="14" rx="2.5" /><rect x="1.5" y="22.5" width="14" height="14" rx="2.5" /><rect x="20" y="22.5" width="14" height="14" rx="2.5" /><path d="M25.5 5L20.5 10.5Q19.5 12 20.5 13.5L25.5 19Q27 20.5 28.5 19L33.5 13.5Q34.5 12 33.5 10.5L28.5 5Q27 3.500 25.5 5Z" />
            </svg>
            <Label $size={23.5}>功能</Label>
          </BarItem>
          <BarItem $w={148}>
            <svg width="38" height="43" viewBox="0 0 38 43" fill="none" stroke={ORANGE} strokeWidth="1.9"><circle cx="19" cy="20.5" r="17.8" /><path d="M10.5 20.5H27.5M19 12V29" /></svg>
            <Label $size={23.5} $color="#f25500">加自选</Label>
          </BarItem>
        </BarItems>
        <HomeIndicator />
      </BottomBar>
    </Page>
  );
}
